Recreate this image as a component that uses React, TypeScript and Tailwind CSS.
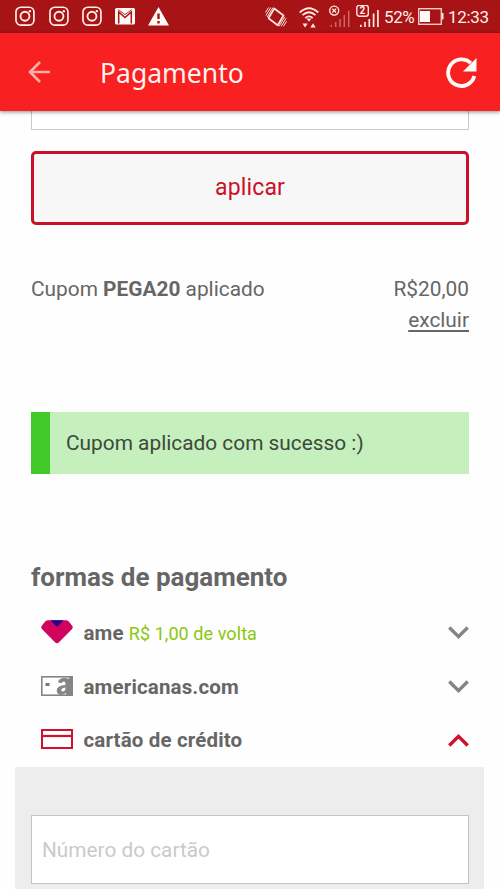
import React from "react";

function Instagram() {
  return (
    <svg className="mr-[13px] h-[21px] w-[20.500px] shrink-0" viewBox="0 0 21 21" fill="none" stroke="#fff0ea">
      <rect x="1" y="1" width="18.4" height="18.4" rx="5" strokeWidth="1.7" />
      <circle cx="10.2" cy="10.2" r="4.6" strokeWidth="1.9" />
      <circle cx="15.2" cy="5" r="1.2" fill="#fff0ea" stroke="none" />
    </svg>
  );
}

function StatusBar() {
  return (
    <div className="flex h-[33px] items-center bg-[#a81315] pl-[15px] pr-[10px] text-[#fff0ea]">
      <Instagram />
      <Instagram />
      <Instagram />
      <svg className="-ml-[0.500px] h-[17px] w-[20px] shrink-0" viewBox="0 0 20 17">
        <rect width="20" height="16.5" rx="1.5" fill="#fffaf8" />
        <path d="M3.700 15.500V4l6.300 5.500L16.300 4v11.500" fill="none" stroke="#a81315" strokeWidth="1.500" />
        <path d="M3.500 1.700 10 6.600l6.500-4.900" fill="none" stroke="#a81315" strokeWidth="0.900" />
      </svg>
      <svg className="ml-[12.500px] h-[19px] w-[21px] shrink-0" viewBox="0 0 21 19">
        <path d="M10.500 0 21 18.500H0Z" fill="#fffaf8" />
        <path d="M9.300 6.500h2.400v5.500H9.300ZM9.300 14h2.400v2.400H9.300Z" fill="#a81315" />
      </svg>
      <div className="ml-auto flex items-center">
        <svg className="h-[22px] w-[22px]" viewBox="0 0 22 22" fill="none" stroke="#ffe7df">
          <path d="M9.300 2.500 18.500 9.500 12.700 19.300 3.500 12.300Z" strokeWidth="1.700" strokeLinejoin="round" />
          <path d="M5.800 1.500.9 9.500M8 1.500 2.200 11M3.500 1.500.5 6.500M16.200 20.300 21.100 12.300M14 20.300 19.800 10.800M18.500 20.300 21.500 15.300" strokeWidth="1" />
        </svg>
        <svg className="ml-[12px] h-[22px] w-[20px]" viewBox="0 0 20 22" fill="none" stroke="#ffe7df">
          <path d="M.7 6.500Q10-2 19.300 6.500M3.500 9.200Q10 3.300 16.500 9.200M6.300 12Q10 8.700 13.700 12" strokeWidth="1.700" />
          <path d="M7.500 12.500h5L10 15.800ZM3.500 17.500h5.200L6 21.500ZM11.300 21.500h5.400L14 17.200Z" fill="#ffe7df" stroke="none" />
        </svg>
        <svg className="ml-[10px] h-[23px] w-[21px]" viewBox="0 0 21 23" fill="none">
          <path d="M2.300 22v-2.300M6.700 22v-5M11 22v-8M15.300 22V10M19.700 22V5.500" stroke="#cf6865" strokeWidth="1.500" />
          <circle cx="5.200" cy="5.600" r="4.500" stroke="#ffe7df" strokeWidth="1.400" />
          <path d="m3.300 3.700 3.800 3.800m0-3.800L3.300 7.500" stroke="#ffe7df" strokeWidth="1.300" />
        </svg>
        <div className="relative ml-[6px] h-[23px] w-[23px]">
          <svg className="h-[23px] w-[23px]" viewBox="0 0 23 23" fill="none" stroke="#ffe7df">
            <rect x=".8" y=".3" width="11.500" height="11" rx="2.500" strokeWidth="1.400" />
            <path d="M4.800 22v-2.300M9 22v-5M13.300 22v-8M17.600 22V8.500M21.900 22V5" strokeWidth="1.700" />
          </svg>
          <span className="absolute left-[3.500px] top-0 text-[10px] font-bold leading-[11px]">2</span>
        </div>
        <span className="ml-[5px] w-[34px] text-[17px] leading-5 tracking-[-0.4px]">52%</span>
        <svg className="h-[17px] w-[26px]" viewBox="0 0 26 17" fill="none">
          <rect x=".7" y=".7" width="22.600" height="15.600" stroke="#f3cbc5" strokeWidth="1.400" />
          <path d="M2 3h10v11H2Z" fill="#fffaf8" />
          <path d="M24 5h1.500v6.500H24Z" fill="#ffe7df" />
        </svg>
        <span className="ml-[4px] w-[42px] whitespace-nowrap text-[17px] leading-5 tracking-[-0.35px]">12:33</span>
      </div>
    </div>
  );
}

function Header() {
  return (
    <header className="relative flex h-[78px] items-center bg-[#f82021] pl-[28px] pr-[23px] shadow-[0_1px_4px_rgba(0,0,0,0.45)]">
      <svg className="mt-[-1px] h-[22px] w-[23px]" viewBox="0 0 23 22" fill="none" stroke="#ffb0a9" strokeWidth="2.600">
        <path d="M22 11H2M12 1 2 11l10 10" />
      </svg>
      <h1 className="ml-[49px] mt-[1px] font-['Noto_Sans',sans-serif] text-[26.500px] leading-8 text-[#fff3ee]">Pagamento</h1>
      <svg className="ml-auto h-[31px] w-[31px]" viewBox="0 0 31 31">
        <path d="M24.800 6.200A13.300 13.300 0 1 0 28.300 19" fill="none" stroke="#fffaf8" strokeWidth="3.800" />
        <path d="M30.500 1v13.500H17Z" fill="#fffaf8" />
      </svg>
    </header>
  );
}

function Chevron({ open = false }: { open?: boolean }) {
  return (
    <svg className="ml-auto mt-[1px] h-[14px] w-[21px]" viewBox="0 0 21 14" fill="none" stroke={open ? "#d2102c" : "#858585"} strokeWidth="3.400">
      <path d={open ? "M1.300 12.500 10.500 3.300l9.200 9.200" : "M1.300 1.500l9.200 9.200 9.200-9.200"} />
    </svg>
  );
}

function Method({ icon, name, note, open }: { icon: React.ReactNode; name: string; note?: string; open?: boolean }) {
  return (
    <div className="flex h-[53.500px] items-center pl-[41px] pr-[31px]">
      {icon}
      <strong className="ml-[10.500px] mt-[2px] text-[20.500px] font-bold tracking-[0.150px] text-[#666]">{name}</strong>
      {note && <span className="ml-[5px] mt-[1px] text-[18px] tracking-[0.070px] text-[#8ac80c]">{note}</span>}
      <Chevron open={open} />
    </div>
  );
}

const ameIcon = (
  <svg className="mt-[-1px] h-[24px] w-[32px]" viewBox="0 0 32 24">
    <path d="M7 .3h18q1.500 0 2.800 1.200l3.400 4.200q1.200 2-.6 3.900L18 22.300q-2 1.800-4 0L1.400 9.600Q-.4 7.700.8 5.700L4.200 1.500Q5.500.3 7 .3Z" fill="#d0035f" />
    <path d="M9.500.3h13L17.200 5.700q-1.200 1-2.400 0Z" fill="#210087" />
  </svg>
);

const americanasIcon = (
  <svg className="mt-[-1px] h-[20px] w-[32px]" viewBox="0 0 32 20">
    <rect x=".8" y=".8" width="30.400" height="18.400" fill="#fff" stroke="#858585" strokeWidth="1.600" />
    <path d="M4.500 7h4v3h-4Z" fill="#777" />
    <path d="M28 1h3.500v18H28Z" fill="#858585" />
    <path d="M17 6.500Q17.500 2 23.500 2T30 6.500V19H25.200L24.800 17Q23 18.800 20 18.800 15.700 18.400 15.700 14.500 15.700 9.500 24.500 9V7.700Q24.500 5.500 22.800 5.500T20.900 7ZM24.500 11.500Q20.300 12 20.300 14 20.300 15.500 21.900 15.500 24.500 15.400 24.500 11.500Z" fill="#858585" />
  </svg>
);

const cardIcon = (
  <svg className="mt-[-1px] h-[20px] w-[32px]" viewBox="0 0 32 20" fill="none" stroke="#d2102c">
    <rect x="1" y="1" width="30" height="18" strokeWidth="2" />
    <path d="M1 7h30" strokeWidth="2.200" />
  </svg>
);

export default function App() {
  return (
    <div className="h-[889px] w-[500px] overflow-hidden bg-[#fefefe] font-['Roboto',sans-serif] text-[#666]">
      <StatusBar />
      <Header />
      <main>
        <div className="mx-[31px] h-[19px] border-x border-b border-[#c8c8c8] bg-white" />
        <button className="mx-[31px] mt-[21px] flex h-[74px] w-[438px] items-center justify-center rounded-[5px] border-[3px] border-[#c91129] bg-[#f7f7f7] text-[23px] tracking-[0.150px] text-[#c91129]">
          aplicar
        </button>
        <div className="mx-[31px] mt-[49px] flex h-[138px] justify-between text-[20.850px] leading-[31px]">
          <p>Cupom <strong className="font-bold">PEGA20</strong> aplicado</p>
          <div className="text-right">
            <p>R$20,00</p>
            <a className="underline decoration-[1.500px] underline-offset-[3px]">excluir</a>
          </div>
        </div>
        <div className="mx-[31px] flex h-[62px] items-center border-l-[19px] border-[#40cb2a] bg-[#c6efbe] pl-[16px] pt-[1px] text-[20.850px] text-[#3c493b]">
          Cupom aplicado com sucesso :)
        </div>
        <h2 className="ml-[31px] mt-[88px] h-[44px] text-[26px] font-bold leading-[30px]">formas de pagamento</h2>
        <Method icon={ameIcon} name="ame" note="R$ 1,00 de volta" />
        <Method icon={americanasIcon} name="americanas.com" />
        <Method icon={cardIcon} name="cartão de crédito" open />
        <section className="ml-[15px] mr-[16px] h-[125px] bg-[#ededed] pl-[16px] pr-[15px] pt-[48.500px]">
          <div className="flex h-[69px] items-center border border-[#c4c4c4] bg-white pl-[10px] pt-[2px] text-[20.800px] text-[#cacaca]">
            Número do cartão
          </div>
        </section>
      </main>
    </div>
  );
}
